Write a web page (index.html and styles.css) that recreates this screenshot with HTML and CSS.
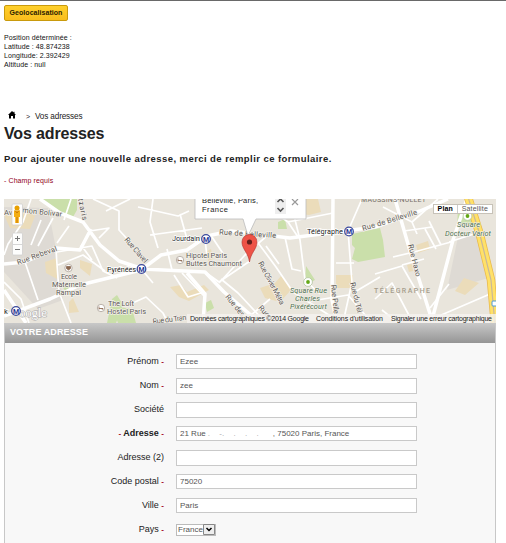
FILE: index.html
```html
<!DOCTYPE html>
<html lang="fr">
<head>
<meta charset="utf-8">
<title>Vos adresses</title>
<link rel="stylesheet" href="styles.css">
</head>
<body>
<main class="page">
  <button class="geo">Geolocalisation</button>
  <div class="position"><div>Position déterminée :</div><div>Latitude : 48.874238</div><div>Longitude: 2.392429</div><div>Altitude : null</div></div>
  <nav class="crumbs">
    <svg class="home" viewBox="0 0 8 8"><path d="M4 0 0 4h1v3.500h2V5h2v2.500h2V4h1L6.500 2.500V.7H5.600v.9z"/></svg>
    <span class="sep">&gt;</span><span>Vos adresses</span>
  </nav>
  <h1>Vos adresses</h1>
  <h2>Pour ajouter une nouvelle adresse, merci de remplir ce formulaire.</h2>
  <p class="required">- Champ requis</p>
  <section class="map">
    <svg class="tiles" viewBox="4 199 492 124">
      <path class="ground" d="M4 199h492v124H4z"/>
      <path class="block" d="M4 207 48 208 56 249 63 300 38 309 4 272zM458 237l24-3 10 43-45 13z"/>
      <path class="park" d="M42 199h35v11l-4 7-20-8zM352 234l28-6 3 12 2 17-27 5-6-3 3-11-3-3zM278 222l7-3 2 10h-9zM306 266l9 14-10 5zM458 207l14 2 1 14-16 5zM112 299l5-4 6 10-7 18h-9zM112 306l20 3 4 14h-18zM62 286l10-2-6 8zM205 303l6-3 3 8-7 4z"/>
      <path class="sand" d="M4 215l18-8 13 9-5 13-20-1zM45 262l12-4v21l-11-6zM80 260l12 4-2 12-10-8zM170 287l11-2 6 7 17-7 5 5-20 11-10-4zM292 199h26l3 13-12 3-16-2zM260 288l15-5 6-7 11 13-12 13-15-4zM336 275h17v13h-17zM416 245l12-4 2 8-12 4zM407 265l9-2 1 7-8 2zM455 291l9-13 15 5-14 12zM69 302l4-4 6 14-10 1zM207 251l4-2 2 10-5 2z"/>
      <g class="minor">
        <path d="M31 199 23 222 8 244 4 255M41 220 31 245M53 218 38 246M69 226 57 243M71 199 64 220M25 262 38 300M56 250 59 292 71 323M57 252 92 246 103 271 117 278M58 265 83 255 105 271M90 231 109 228 99 238M93 199 119 211 119 230 130 242M106 211 130 199M81 245 92 260M4 282 21 299 29 323"/>
        <path d="M153 199 150 222 158 248M138 207 178 216 189 211M150 235 202 228M167 249 172 270M180 214 187 239M205 239 207 257M212 237 224 255M143 271 153 283M126 306 146 297 163 313 168 323M174 275 188 297 204 292M205 272 219 282 250 261M219 283 245 255 268 235M221 279 238 293 266 323M182 273 204 296"/>
        <path d="M253 236 276 267 293 292 332 317M266 246 279 264M285 237 292 269 301 271M290 199 300 240 305 280 320 294M333 213 288 222 256 199M288 222 298 237M362 199 348 231 352 282 343 323M354 263 336 263M353 293 380 277M311 301 348 295 372 323M250 316 270 299"/>
        <path d="M383 207 412 222 438 199M404 231 432 227M412 222 417 234M425 229 436 249M429 221 441 245M393 257 414 252 451 242M375 274 402 266 421 299M375 299 392 283 413 323M402 265 424 259M432 319 490 294M449 242 477 233M430 308 449 284M382 310 398 323"/>
      </g>
      <g class="major">
        <path d="M40 199 60 213 83 222 100 245 119 261 143 269M4 264 25 262 56 248 80 250 91 229M4 316 50 299 80 285 141 270 161 255 187 250 207 236 231 231 290 238 345 231 375 227 420 211 448 199M142 269 205 272 224 292 260 323M187 273 205 294 203 323M333 199 332 300 337 323M395 199 410 251 432 320 453 240 467 199M4 290 26 323"/>
      </g>
      <path class="hwcase" d="M468 197 480 235 491 280 495 325"/>
      <path class="hw" d="M468 197 480 235 491 280 495 325"/>
      <path class="hwline" d="M468 197 480 235 491 280 495 325"/>
      <g class="road-name">
        <text x="4" y="215">Av</text><text x="22" y="212.500" transform="rotate(6 22 212.500)" textLength="40">mon Bolivar</text>
        <text x="18" y="265" transform="rotate(-20 18 265)" textLength="42">Rue Rebeval</text>
        <text x="78" y="199" transform="rotate(78 78 199)" textLength="22">tzaris</text>
        <text x="124" y="240" transform="rotate(49 124 240)" textLength="31">Rue Clavel</text>
        <text x="219" y="234.500" textLength="57" transform="rotate(3.500 219 234.500)">Rue de Belleville</text>
        <text x="363" y="231" transform="rotate(-17 363 231)" textLength="57">Rue de Belleville</text>
        <text x="225" y="297" transform="rotate(51 225 297)" textLength="26">Rue des</text>
        <text x="258" y="263" transform="rotate(62 258 263)" textLength="48">Rue Olivier Métra</text>
        <text x="331" y="285" transform="rotate(84 331 285)" textLength="29">Rue Pelle</text>
        <text x="350" y="283" transform="rotate(76 350 283)" textLength="31">Rue du Tél</text>
        <text x="408" y="245" transform="rotate(76 408 245)" textLength="33">Rue Haxo</text>
        <text x="153" y="324" transform="rotate(-7 153 324)" textLength="34">Rue du Tran</text>
        <text x="258" y="308" transform="rotate(48 258 308)">Rue</text>
      </g>
      <g class="place">
        <text x="61" y="279" textLength="16">Ecole</text><text x="52" y="287" textLength="34">Maternelle</text><text x="56" y="295" textLength="25">Rampal</text>
        <text x="108" y="306" textLength="26">The Loft</text><text x="107" y="314" textLength="39">Hostel Paris</text>
        <text x="186" y="258" textLength="41">Hipotel Paris</text><text x="186" y="266" textLength="56">Buttes Chaumont</text>
      </g>
      <g class="station">
        <text x="107" y="272" textLength="29">Pyrénées</text><text x="172" y="241" textLength="28">Jourdain</text><text x="307" y="234" textLength="36">Télégraphe</text><text x="4" y="314">k</text>
      </g>
      <g class="green-name">
        <text x="290" y="293" textLength="37">Square Rue</text><text x="295" y="301" textLength="25">Charles</text><text x="290" y="309" textLength="37">Pixérécourt</text>
        <text x="457" y="227" textLength="23">Square</text><text x="445" y="236" textLength="46">Docteur Variot</text>
      </g>
      <text class="area" x="361" y="202" textLength="65">MAUSSINS-NULLET</text>
      <text class="area wide" x="374" y="293" textLength="56">TÉLÉGRAPHE</text>
      <text class="logo" x="19" y="317" textLength="28">oogle</text>
      <g class="metro">
        <circle cx="141.500" cy="269" r="4.300"/><circle cx="206" cy="239" r="4.300"/><circle cx="349" cy="231.500" r="4.300"/><circle cx="16" cy="311" r="4.300"/>
        <text x="141.500" y="271.600">M</text><text x="206" y="241.600">M</text><text x="349" y="234.100">M</text><text x="16" y="313.600">M</text>
      </g>
      <g class="poi"><circle cx="68.500" cy="268" r="3.700"/><circle cx="101" cy="308" r="3.700"/><circle cx="180" cy="260" r="3.700"/></g>
      <path class="poi-mark" d="M66.500 266.500h4v2l-2 1.500-2-1.500zM99 306.500v3m0-1h4v1M178 258.500v3m0-1h4v1"/>
      <g class="tree-ring"><circle cx="308" cy="282" r="4.400"/><circle cx="467.500" cy="216" r="4.400"/></g>
      <g class="tree"><circle cx="308" cy="282" r="1.900"/><circle cx="467.500" cy="216" r="1.900"/></g>
      <rect class="shield" x="492" y="301" width="5" height="5" rx="1"/>
      <path class="bubble" d="M195 196h111v23H256l-8 17-5-17h-48z"/>
      <path class="pin" d="M249.500 262C248.500 253 242 249 242 242a7.500 7.500 0 0 1 15 0c0 7-6.500 11-7.500 20z"/>
      <circle class="pin-dot" cx="249.500" cy="242" r="2.600"/>
      <rect class="scroll" x="275" y="197" width="11" height="17"/>
      <path class="arrows" d="m277.500 202 3-3 3 3M277.500 208l3 3 3-3"/>
      <path class="close" d="m292 199 6 6m0-6-6 6"/>
      <text class="bubble-text" x="202" y="203" textLength="56">Belleville, Paris,</text><text class="bubble-text" x="202" y="212" textLength="26">France</text>
      <rect class="control" x="12" y="204" width="10.500" height="21" rx="1"/>
      <path class="man" d="M14 210.500h6v6.500h-1.200v6h-3.600v-6H14z"/><circle class="man-head" cx="17" cy="208" r="2.500"/><path class="man-shade" d="m15 210.500 2 2.500 2-2.500M17 217v6"/>
      <rect class="control" x="12.500" y="233" width="10" height="22" rx="1"/><path class="zoom-marks" d="M15 238.500h5M17.500 236v5M15 249.500h5"/><path class="zoom-line" d="M13 244.500h9"/>
      <path class="legal-bg" d="M187 314h309v9H187z"/>
      <g class="legal"><text x="190" y="321" textLength="119">Données cartographiques ©2014 Google</text><text x="316" y="321" textLength="67">Conditions d'utilisation</text><text x="391" y="321" textLength="101">Signaler une erreur cartographique</text></g>
    </svg>
    <div class="types"><span class="plan">Plan</span><span>Satellite</span></div>
  </section>
  <section class="panel">
    <h3>VOTRE ADRESSE</h3>
    <form class="form">
      <div class="row"><label>Prénom <i>-</i></label><div class="field">Ezee</div></div>
      <div class="row"><label>Nom <i>-</i></label><div class="field tall">zee</div></div>
      <div class="row"><label>Société</label><div class="field tall"></div></div>
      <div class="row"><label class="strong"><i>-</i> Adresse <i>-</i></label><div class="field address"><span>21 Rue</span><span class="faint"><b>.</b><b>-.</b><b>.</b><b>.</b><b>.</b></span><span>, 75020 Paris, France</span></div></div>
      <div class="row"><label>Adresse (2)</label><div class="field tall"></div></div>
      <div class="row"><label>Code postal <i>-</i></label><div class="field">75020</div></div>
      <div class="row"><label>Ville <i>-</i></label><div class="field">Paris</div></div>
      <div class="row"><label>Pays <i>-</i></label><div class="select"><span>France</span><svg class="drop" viewBox="0 0 12 11"><path class="drop-box" d="M.5.500h11v10H.5z"/><path class="drop-arrow" d="m3.500 4 2.500 2.500L8.500 4"/></svg></div></div>
    </form>
  </section>
</main>
</body>
</html>
```
FILE: styles.css
```css
* { box-sizing: border-box; }
body { margin: 0; background: #fff; font-family: "Liberation Sans", Arial, sans-serif; color: #222; }
.page { width: 506px; height: 543px; overflow: hidden; border-top: 1px solid #696969; padding: 4px 10px 0 4px; }
.geo { display: block; width: 64px; height: 16px; padding: 0; border: 1px solid #c99a0c; border-radius: 2px; background: linear-gradient(#ffd02c, #f9bd1c); font: bold 7px/12px "Liberation Sans", Arial, sans-serif; letter-spacing: .05px; color: #2b2000; white-space: nowrap; }
.position { margin-top: 12px; height: 36px; font-size: 7px; line-height: 9px; letter-spacing: .1px; color: #111; white-space: nowrap; }
.crumbs { display: flex; align-items: center; height: 12px; margin-top: 41px; padding-left: 4px; font-size: 8.200px; letter-spacing: -.15px; }
.home { width: 8px; height: 8px; margin-right: 10px; margin-top: -2px; fill: #000; }
.sep { width: 9px; font-size: 7px; }
h1 { margin: 1px 0 0; font-size: 16px; line-height: 22px; letter-spacing: -.14px; color: #222; }
h2 { margin: 8px 0 0; font-size: 9.500px; line-height: 12px; letter-spacing: .43px; white-space: nowrap; }
.required { margin: 11px 0 0; height: 9px; font-size: 7px; line-height: 9px; letter-spacing: .1px; color: #900018; }
.map { position: relative; width: 492px; height: 124px; margin-top: 14px; overflow: hidden; }
.tiles { display: block; width: 492px; height: 124px; font-family: Roboto, sans-serif; font-size: 7.500px; }
.ground { fill: #e9e5dc; }
.block { fill: #dedad4; }
.park { fill: #cadfaa; }
.sand { fill: #ebdcba; }
.minor, .major { fill: none; stroke: #fff; stroke-linejoin: round; }
.minor { stroke-width: 1.700; }
.major { stroke-width: 3.500; }
.hwcase, .hw, .hwline { fill: none; }
.hwcase { stroke: #e9b94e; stroke-width: 8.500; }
.hw { stroke: #ffe168; stroke-width: 7; }
.hwline { stroke: #c9b89a; stroke-width: 1.200; }
.road-name, .place { fill: #5d5a57; stroke: #f4f1eb; stroke-width: 1.300; paint-order: stroke; }
.station { fill: #222; stroke: #fff; stroke-width: 1.300; paint-order: stroke; }
.green-name { fill: #4f7052; stroke: #f2f0e8; stroke-width: 1.200; paint-order: stroke; font-style: italic; }
.area { fill: #777069; font-size: 7px; }
.wide { fill: #a59d8c; font-weight: 500; }
.metro circle { fill: #fff; stroke: #3c4a9c; stroke-width: 1.300; }
.metro text { fill: #26348f; font-size: 7px; font-weight: bold; text-anchor: middle; }
.poi { fill: #fff; stroke: #aaa097; stroke-width: .8; }
.poi-mark { fill: #8b6850; stroke: #8b6850; stroke-width: .8; }
.tree-ring { fill: #fff; stroke: #a9bd94; stroke-width: .7; }
.tree { fill: #64a817; }
.shield { fill: #fff; stroke: #4a9ad8; }
.logo { font-family: "Liberation Serif", serif; font-size: 13px; fill: #fff; stroke: #aaa; stroke-width: 1; paint-order: stroke; }
.bubble { fill: #fff; stroke: #bbb; stroke-width: .8; }
.pin { fill: #ee5347; stroke: #b93830; stroke-width: .7; }
.pin-dot { fill: #65201c; }
.scroll { fill: #eee; }
.arrows { fill: none; stroke: #555; stroke-width: 1.600; }
.close { stroke: #999; stroke-width: 1.200; }
.bubble-text, .legal { font-family: "Liberation Sans", Arial, sans-serif; fill: #222; }
.bubble-text { font-size: 7.500px; }
.legal { font-size: 7px; }
.legal-bg { fill: #f5f3f0; fill-opacity: .8; }
.control { fill: #fff; fill-opacity: .93; stroke: #ccc; stroke-width: .7; }
.man-head { fill: #e8a000; }
.man { fill: #f4ae12; }
.man-shade { fill: none; stroke: #c26d00; stroke-width: .8; }
.zoom-marks { stroke: #777; }
.zoom-line { stroke: #ccc; stroke-width: .8; }
.types { position: absolute; top: 5px; right: 3px; display: flex; width: 60px; height: 10px; border: 1px solid #c7c2b8; background: #fff; font-size: 7px; line-height: 8px; color: #555; white-space: nowrap; }
.types span { width: 35px; text-align: center; letter-spacing: .15px; }
.types .plan { width: 24px; border-right: 1px solid #ccc; font-weight: bold; color: #000; }
.panel { width: 492px; height: 220px; border: solid #c8c8c8; border-width: 0 1px; background: #f8f8f8; }
h3 { margin: 0; height: 20px; padding-left: 5px; background: linear-gradient(#c8c8c8, #959595); color: #fff; font-size: 9px; line-height: 19px; letter-spacing: .1px; }
.form { padding-top: 6px; }
.row { display: flex; height: 24px; padding-top: 5px; }
label { width: 159px; margin-right: 12px; font-size: 9px; line-height: 14px; text-align: right; white-space: pre; }
i { color: #a00020; font-style: normal; font-size: 8px; font-weight: bold; }
.strong { font-weight: bold; }
.field { width: 241px; height: 15px; padding-left: 3px; border: 1px solid #c9c9c9; background: #fff; color: #555; font-size: 8px; line-height: 13px; white-space: nowrap; }
.tall { height: 16px; }
.address { display: flex; }
.faint { display: flex; justify-content: space-between; width: 67px; padding: 0 14px 0 2px; color: #aaa; }
.faint b { font-weight: normal; }
.select { display: flex; width: 40px; height: 12px; margin-top: 2px; border: 1px solid #bbb; background: #fff; color: #555; font-size: 8px; line-height: 10px; }
.select span { width: 26px; padding-left: 1px; }
.drop { width: 12px; height: 11px; margin-top: -1px; flex: none; }
.drop-box { fill: #eee; stroke: #888; }
.drop-arrow { fill: none; stroke: #000; stroke-width: 1.500; }
```
